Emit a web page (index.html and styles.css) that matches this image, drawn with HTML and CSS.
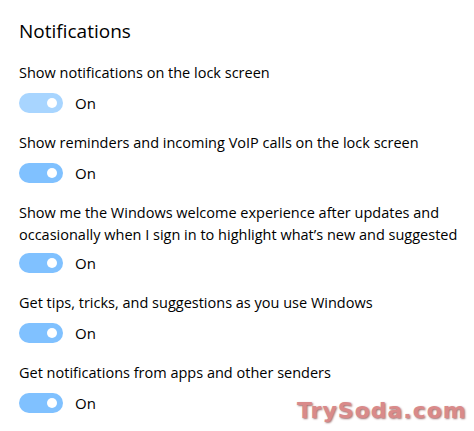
FILE: index.html
```html
<!DOCTYPE html>
<html lang="en">
<head>
  <meta charset="UTF-8">
  <title>Notifications</title>
  <link rel="stylesheet" href="styles.css">
</head>
<body>

  <h2>Notifications</h2>

  <div class="ajustes">
    <div class="ajuste">
      <p>Show notifications on the lock screen</p>
      <div class="toggle claro"><span class="pill"><span class="knob"></span></span>On</div>
    </div>

    <div class="ajuste">
      <p>Show reminders and incoming VoIP calls on the lock screen</p>
      <div class="toggle"><span class="pill"><span class="knob"></span></span>On</div>
    </div>

    <div class="ajuste largo">
      <p>Show me the Windows welcome experience after updates and occasionally when I sign in to highlight what’s new and suggested</p>
      <div class="toggle"><span class="pill"><span class="knob"></span></span>On</div>
    </div>

    <div class="ajuste">
      <p>Get tips, tricks, and suggestions as you use Windows</p>
      <div class="toggle"><span class="pill"><span class="knob"></span></span>On</div>
    </div>

    <div class="ajuste">
      <p>Get notifications from apps and other senders</p>
      <div class="toggle"><span class="pill"><span class="knob"></span></span>On</div>
    </div>
  </div>

  <div class="marca">TrySoda.com</div>

</body>
</html>
```

FILE: styles.css
```css
body {
  margin: 0;
  padding: 0 19px;
  background-color: #fff;
  color: #000;
  font-family: "Open Sans", "Noto Sans", sans-serif;
  font-size: 14.5px;
  position: relative;
  height: 431px;
  overflow: hidden;
}

h2 {
  font-size: 19px;
  font-weight: normal;
  margin: 0;
  padding-top: 17px;
  line-height: 28px;
  height: 45px;
}

.ajuste {
  margin-bottom: 19px;
}

.ajuste p {
  margin: 0;
  line-height: 22px;
  width: 450px;
}

.toggle {
  display: flex;
  align-items: center;
  gap: 12px;
  margin-top: 9px;
  height: 20px;
  font-size: 15px;
}

.ajuste.largo .toggle {
  margin-top: 7px;
}

.pill {
  width: 44px;
  height: 20px;
  border-radius: 10px;
  background-color: #80c1ff;
  position: relative;
}

.toggle.claro .pill {
  background-color: #a8d5ff;
}

.knob {
  position: absolute;
  top: 5px;
  left: 28px;
  width: 10px;
  height: 10px;
  border-radius: 50%;
  background: #fff;
}

.marca {
  position: absolute;
  left: 297px;
  top: 398px;
  font-family: "DejaVu Sans", sans-serif;
  font-weight: bold;
  font-size: 22px;
  line-height: 26px;
  letter-spacing: 1px;
  color: #d98a8a;
  text-shadow: 1px 1px 2px #a07070;
}
```
